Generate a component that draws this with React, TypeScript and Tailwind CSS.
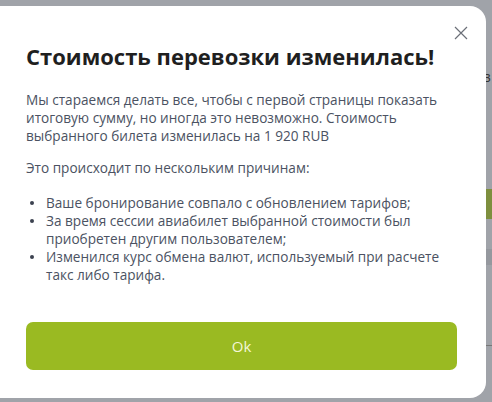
import React from 'react';

const reasons = [
  ['Ваше бронирование совпало с обновлением тарифов;'],
  ['За время сессии авиабилет выбранной стоимости был', 'приобретен другим пользователем;'],
  ['Изменился курс обмена валют, используемый при расчете', 'такс либо тарифа.'],
];

function CloseIcon() {
  return (
    <svg width="14" height="14" viewBox="0 0 14 14" fill="none" stroke="#6b6f78" strokeWidth="1.2">
      <path d="M1 1L13 13M13 1L1 13" />
    </svg>
  );
}

export default function App() {
  return (
    <div className="relative w-[492px] h-[402px] overflow-hidden bg-[#a0a3a9]" style={{ fontFamily: '"Open Sans", "Noto Sans", sans-serif' }}>
      {/* page behind the overlay */}
      <div className="absolute right-0 top-0 w-[6px] h-full flex flex-col">
        <div className="h-[70px]" />
        <div className="text-[14px] leading-[14px] text-[#333] -ml-[2px]">з</div>
        <div className="h-[105px]" />
        <div className="h-[30px] bg-[#7e8f3e]" />
        <div className="h-[30px]" />
        <div className="h-[16px] bg-[#95989e]" />
        <div className="h-[80px]" />
        <div className="h-px bg-[#777]" />
      </div>

      <div className="absolute left-[-14px] top-[6px] w-[500px] h-[392px] bg-white rounded-[16px]">
        <div className="flex justify-end pt-[20px] pr-[18px]">
          <CloseIcon />
        </div>
        <div className="pl-[40px] pr-[30px]">
          <h1 className="text-[22px] leading-[32px] font-bold text-[#1f1f1f] whitespace-nowrap">
            Стоимость перевозки изменилась!
          </h1>
          <div className="mt-[19px] text-[13.6px] leading-[18px] text-[#4b5262]">
            <p>
              Мы стараемся делать все, чтобы с первой страницы показать
              <br />
              итоговую сумму, но иногда это невозможно. Стоимость
              <br />
              выбранного билета изменилась на 1 920 RUB
            </p>
            <p className="mt-[14px]">Это происходит по нескольким причинам:</p>
            <ul className="mt-[17px]">
              {reasons.map((lines, i) => (
                <li key={i} className="flex">
                  <span className="w-[20px] h-[18px] flex items-center pl-[4px]">
                    <span className="w-[4px] h-[4px] rounded-full bg-[#3c4250]" />
                  </span>
                  <span>
                    {lines.map((l, j) => (
                      <span key={j} className="block">{l}</span>
                    ))}
                  </span>
                </li>
              ))}
            </ul>
          </div>
          <button className="mt-[38px] w-[431px] h-[48px] rounded-[7px] bg-[#9aba22] text-[#f4f7d8] text-[15px]">
            Ok
          </button>
        </div>
      </div>
    </div>
  );
}
